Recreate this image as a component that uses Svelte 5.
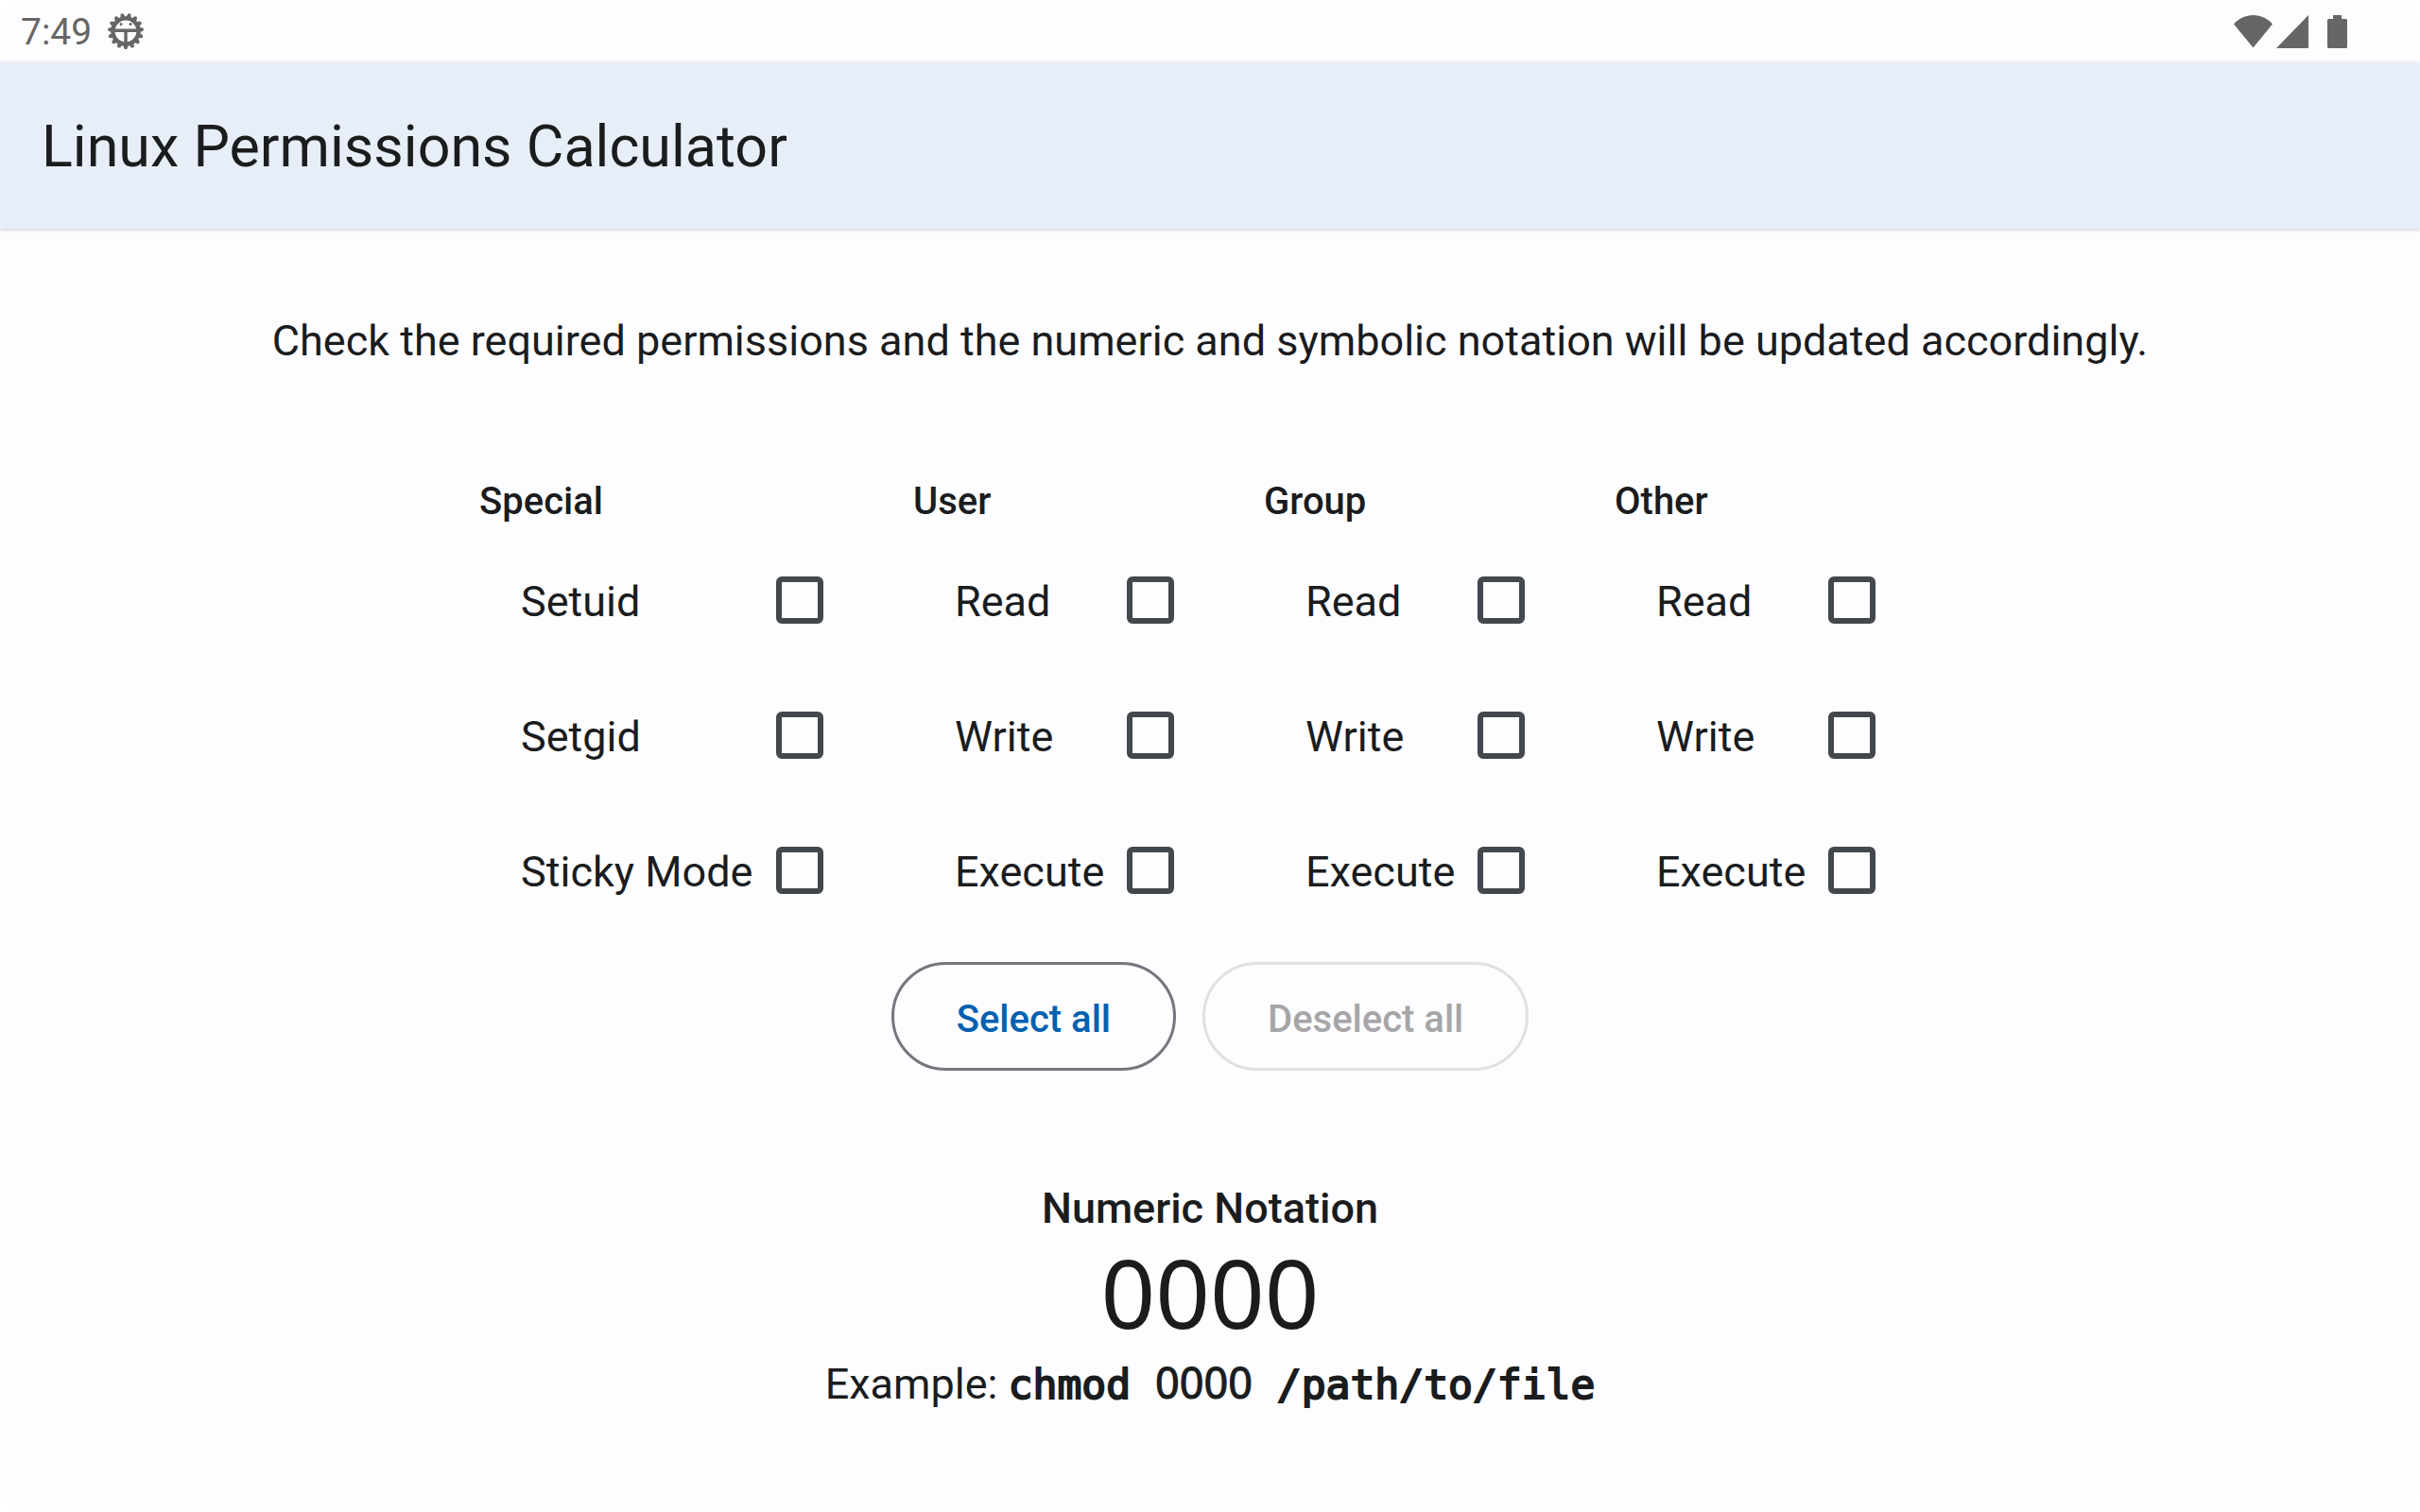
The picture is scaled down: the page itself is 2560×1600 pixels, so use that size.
<script>
  const columns = [
    { title: 'Special', items: ['Setuid', 'Setgid', 'Sticky Mode'] },
    { title: 'User', items: ['Read', 'Write', 'Execute'] },
    { title: 'Group', items: ['Read', 'Write', 'Execute'] },
    { title: 'Other', items: ['Read', 'Write', 'Execute'] },
  ];

  let checks = $state(columns.map(() => [false, false, false]));

  const numeric = $derived(
    checks.map(([a, b, c]) => (a ? 4 : 0) + (b ? 2 : 0) + (c ? 1 : 0)).join('')
  );
  const all = $derived(checks.every((group) => group.every(Boolean)));
  const none = $derived(!checks.some((group) => group.some(Boolean)));

  function setAll(value) {
    checks = columns.map(() => [value, value, value]);
  }

  // Angles of the teeth around the gear of the notification icon
  const teeth = Array.from({ length: 15 }, (_, i) => 180 + i * 24);
</script>

<div class="screen">
  <div class="status">
    <span class="time">7:49</span>
    <svg class="gear" viewBox="0 0 40 40" aria-hidden="true">
      <circle cx="20" cy="20" r="13.6" fill="none" stroke="currentColor" stroke-width="4.4" />
      {#each teeth as angle}
        <path d="M17.2 6 L18.4 1.6 Q20 0.2 21.6 1.6 L22.8 6 Z" fill="currentColor" transform="rotate({angle} 20 20)" />
      {/each}
      <path d="M7 19.2H33M20 19V33" fill="none" stroke="currentColor" stroke-width="3.4" />
      <circle cx="15" cy="12.6" r="1.5" fill="currentColor" />
      <circle cx="25" cy="12.6" r="1.5" fill="currentColor" />
    </svg>
    <div class="system">
      <svg class="wifi" viewBox="0 0 41 35" aria-hidden="true">
        <path d="M0 9.4C5.500 3.500 12.500 0 20.500 0S35.500 3.500 41 9.400L20.500 34.500Z" fill="currentColor" />
      </svg>
      <svg class="signal" viewBox="0 0 34 35" aria-hidden="true">
        <path d="M34 0V35H0Z" fill="currentColor" />
      </svg>
      <svg class="battery" viewBox="0 0 21 35" aria-hidden="true">
        <path d="M6 0H15V4H20L21 5V34L20 35H1L0 34V5L1 4H6Z" fill="currentColor" />
      </svg>
    </div>
  </div>

  <header>
    <h1>Linux Permissions Calculator</h1>
  </header>

  <main>
    <p class="intro">
      Check the required permissions and the numeric and symbolic notation will be updated accordingly.
    </p>

    <div class="columns">
      {#each columns as column, c}
        <fieldset>
          <legend>{column.title}</legend>
          {#each column.items as item, i}
            <label>
              <span>{item}</span>
              <input type="checkbox" bind:checked={checks[c][i]} />
            </label>
          {/each}
        </fieldset>
      {/each}
    </div>

    <div class="actions">
      <button type="button" disabled={all} onclick={() => setAll(true)}>Select all</button>
      <button type="button" disabled={none} onclick={() => setAll(false)}>Deselect all</button>
    </div>

    <section>
      <h2>Numeric Notation</h2>
      <output>{numeric}</output>
      <p class="example">Example: <code>chmod <span class="digits">{numeric}</span> /path/to/file</code></p>
    </section>
  </main>
</div>

<style>
  :global(body) {
    margin: 0;
    background: #ffffff;
  }

  .screen {
    min-height: 100vh;
    box-sizing: border-box;
    border-radius: 28px;
    background: #fdfdff;
    color: #1a1c1e;
    font-family: Roboto, 'Liberation Sans', sans-serif;
    font-size: 45px;
    line-height: 66px;
  }

  .status {
    display: flex;
    align-items: center;
    height: 66px;
    padding: 0 77px 0 22px;
    color: #666666;
  }

  .time {
    padding-top: 2px;
    margin-right: 16px;
    font-size: 39px;
  }

  .gear {
    width: 40px;
    height: 40px;
  }

  .system {
    display: flex;
    margin-left: auto;
  }

  .system svg {
    height: 35px;
  }

  .wifi {
    width: 41px;
  }

  .signal {
    width: 34px;
    margin-left: 4px;
  }

  .battery {
    width: 21px;
    margin-left: 20px;
  }

  header {
    display: flex;
    align-items: center;
    box-sizing: border-box;
    height: 176px;
    padding: 2px 44px 0;
    background: #e7eef8;
    box-shadow: 0 1px 4px rgba(0, 0, 0, 0.2);
  }

  h1 {
    margin: 0;
    font-size: 61px;
    font-weight: 400;
  }

  main {
    display: flex;
    flex-direction: column;
    align-items: center;
    padding-top: 86px;
  }

  .intro {
    margin: 0;
    padding: 0 44px;
    text-align: center;
  }

  .columns {
    display: grid;
    grid-template-columns: 364px repeat(3, 276px);
    gap: 95px;
    padding: 105px 69px 0 0;
  }

  fieldset {
    min-width: 0;
    margin: 0;
    padding: 0;
    border: 0;
  }

  legend {
    padding: 0;
    font-size: 40px;
    font-weight: 500;
    line-height: 64px;
  }

  label {
    display: flex;
    align-items: center;
    justify-content: space-between;
    height: 143px;
    padding-left: 44px;
    white-space: nowrap;
  }

  label span {
    padding-top: 4px;
  }

  input {
    appearance: none;
    box-sizing: border-box;
    flex: none;
    width: 50px;
    height: 50px;
    margin: 0;
    border: 6px solid #43474e;
    border-radius: 6px;
  }

  input:checked {
    border-color: #0060b0;
    background: #0060b0;
  }

  .actions {
    display: flex;
    gap: 28px;
    margin-top: 26px;
  }

  button {
    height: 115px;
    padding: 5px 66px 0;
    border: 3px solid #74777f;
    border-radius: 58px;
    background: none;
    color: #0060b0;
    font: 500 40px Roboto, 'Liberation Sans', sans-serif;
  }

  button:disabled {
    border-color: #e1e1e3;
    color: #a6a6a8;
  }

  section {
    display: flex;
    flex-direction: column;
    align-items: center;
    padding: 113px 44px 44px;
  }

  h2 {
    margin: 0;
    font-size: 45px;
    font-weight: 500;
  }

  output {
    font-family: 'Noto Sans', 'Open Sans', sans-serif;
    font-size: 101px;
    line-height: 110px;
  }

  .example {
    margin: 8px 0 0;
  }

  /* A regular monospace face, thickened slightly */
  code {
    font-family: 'Droid Sans Mono', 'DejaVu Sans Mono', monospace;
    font-size: 43px;
    -webkit-text-stroke: 2px currentColor;
  }

  .digits {
    font-family: 'Noto Sans', 'Open Sans', sans-serif;
    font-size: 45px;
    -webkit-text-stroke: 1px currentColor;
  }
</style>
